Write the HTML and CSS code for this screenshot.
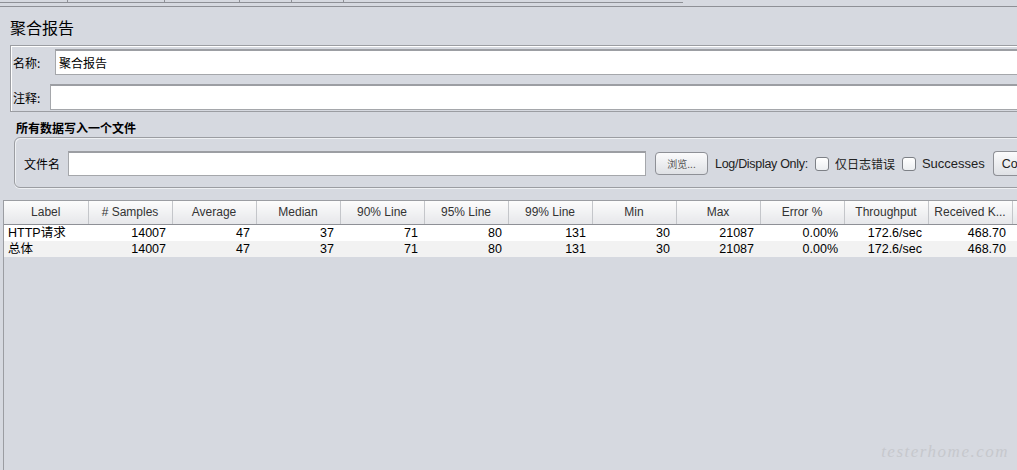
FILE: index.html
```html
<!DOCTYPE html>
<html lang="zh-CN">
<head>
    <meta charset="UTF-8">
    <title>聚合报告</title>
    <link rel="stylesheet" href="styles.css">
</head>
<body>
    <div class="tab-strip">
        <div class="tabs">
            <span class="tick" style="left: 67px"></span>
            <span class="tick" style="left: 164px"></span>
            <span class="tick" style="left: 239px"></span>
            <span class="tick" style="left: 291px"></span>
            <span class="tick" style="left: 343px"></span>
        </div>
    </div>

    <h1 class="title">聚合报告</h1>

    <div class="name-panel">
        <div class="field-row">
            <label class="field-label name-label">名称:</label>
            <input class="text-field" type="text" value="聚合报告">
        </div>
        <div class="field-row">
            <label class="field-label comment-label">注释:</label>
            <input class="text-field" type="text" value="">
        </div>
    </div>

    <div class="section-title">所有数据写入一个文件</div>
    <div class="file-group">
        <span class="file-label">文件名</span>
        <input class="text-field file-input" type="text" value="">
        <button class="btn browse">浏览...</button>
        <span class="opt-label">Log/Display Only:</span>
        <span class="checkbox"></span>
        <span class="opt-text cjk">仅日志错误</span>
        <span class="checkbox"></span>
        <span class="opt-text">Successes</span>
        <button class="btn configure">Co</button>
    </div>

    <div class="table-wrap">
        <table class="stats">
            <thead>
                <tr>
                    <th>Label</th>
                    <th># Samples</th>
                    <th>Average</th>
                    <th>Median</th>
                    <th>90% Line</th>
                    <th>95% Line</th>
                    <th>99% Line</th>
                    <th>Min</th>
                    <th>Max</th>
                    <th>Error %</th>
                    <th>Throughput</th>
                    <th>Received K...</th>
                    <th class="stub"></th>
                </tr>
            </thead>
            <tbody>
                <tr>
                    <td class="lbl">HTTP请求</td>
                    <td>14007</td><td>47</td><td>37</td><td>71</td><td>80</td><td>131</td>
                    <td>30</td><td>21087</td><td>0.00%</td><td>172.6/sec</td><td>468.70</td><td class="stub"></td>
                </tr>
                <tr class="alt">
                    <td class="lbl">总体</td>
                    <td>14007</td><td>47</td><td>37</td><td>71</td><td>80</td><td>131</td>
                    <td>30</td><td>21087</td><td>0.00%</td><td>172.6/sec</td><td>468.70</td><td class="stub"></td>
                </tr>
            </tbody>
        </table>
        <div class="watermark">testerhome.com</div>
    </div>
</body>
</html>
```

FILE: styles.css
```css
* {
    margin: 0;
    padding: 0;
    box-sizing: border-box;
}

html, body {
    height: 100%;
    overflow: hidden;
}

body {
    background: #d6d9e0;
    font-family: 'Liberation Sans', Arial, 'Noto Sans CJK SC', sans-serif;
    font-size: 12px;
    color: #000;
    display: flex;
    flex-direction: column;
}

/* tab strip at the very top */
.tab-strip {
    flex: none;
    height: 7px;
    border-bottom: 1px solid #8e9096;
}

.tabs {
    position: relative;
    width: 683px;
    height: 3px;
    border-bottom: 1px solid #8e9096;
}

.tick {
    position: absolute;
    top: 0;
    width: 1px;
    height: 2px;
    background: #8e9096;
}

.title {
    flex: none;
    font-family: 'Noto Sans CJK SC', sans-serif;
    font-size: 16px;
    font-weight: normal;
    margin: 9px 0 0 10px;
    height: 29px;
    line-height: 22px;
}

/* name / comment */
.name-panel {
    flex: none;
    margin-left: 10px;
    margin-right: -10px;
    border: 1px solid #9b9da2;
    box-shadow: inset 1px 1px 0 #fff;
    padding: 3px 0 1px 1px;
    display: flex;
    flex-direction: column;
    gap: 9px;
}

.field-row {
    display: flex;
    align-items: center;
    height: 26px;
}

.field-label {
    flex: none;
    font-family: 'Noto Sans CJK SC', sans-serif;
    font-size: 12px;
    padding-left: 1px;
}

.name-label {
    width: 43px;
}

.comment-label {
    width: 38px;
}

.text-field {
    flex: 1;
    min-width: 0;
    height: 26px;
    border: 1px solid #a5a7ab;
    border-top: 2px solid #9c9ea3;
    background: #fff;
    font-family: 'Noto Sans CJK SC', sans-serif;
    font-size: 12px;
    padding: 0 3px;
    outline: none;
}

/* write to file */
.section-title {
    flex: none;
    font-family: 'Noto Sans CJK SC', sans-serif;
    font-weight: bold;
    font-size: 12px;
    margin: 6px 0 0 16px;
    height: 19px;
    line-height: 19px;
}

.file-group {
    flex: none;
    margin-left: 14px;
    margin-right: -20px;
    height: 51px;
    border: 1px solid #9b9da2;
    border-radius: 6px;
    box-shadow: inset 1px 1px 0 #eef0f3, 0 1px 0 #eef0f3;
    display: flex;
    align-items: center;
    padding-left: 9px;
    padding-top: 2px;
    overflow: hidden;
}

.file-group > * {
    flex: none;
    white-space: nowrap;
}

.file-label {
    font-family: 'Noto Sans CJK SC', sans-serif;
    width: 44px;
}

.text-field.file-input {
    flex: none;
    width: 578px;
    height: 25px;
}

.btn {
    height: 23px;
    border: 1px solid #8e9096;
    border-radius: 4px;
    background: linear-gradient(#fbfbfc, #dfe1e5);
    font-family: 'Noto Sans CJK SC', sans-serif;
    font-size: 11px;
    color: #333;
}

.browse {
    width: 53px;
    margin-left: 9px;
    font-size: 10px;
    color: #555;
}

.configure {
    width: 24px;
    height: 25px;
    margin-left: 8px;
    border-right: none;
    border-radius: 4px 0 0 4px;
    font-family: 'Liberation Sans', sans-serif;
    font-size: 12.5px;
    text-align: left;
    padding-left: 8px;
    overflow: hidden;
    color: #222;
}

.opt-label {
    margin-left: 7px;
    color: #222;
    font-size: 12.5px;
    letter-spacing: -0.3px;
}

.checkbox {
    width: 14px;
    height: 14px;
    border: 1px solid #7d8086;
    border-radius: 3px;
    background: linear-gradient(#fff, #eceef1);
    margin-left: 7px;
}

.opt-text {
    margin-left: 6px;
    font-family: 'Liberation Sans', 'Noto Sans CJK SC', sans-serif;
    font-size: 13px;
    color: #222;
}

.opt-text.cjk {
    font-family: 'Noto Sans CJK SC', sans-serif;
    font-size: 12px;
}

/* results table */
.table-wrap {
    flex: 1;
    position: relative;
    margin: 12px 0 0 3px;
    border-left: 1px solid #9b9da2;
    border-top: 1px solid #9b9da2;
    overflow: hidden;
}

.stats {
    border-collapse: collapse;
    table-layout: fixed;
    width: 1014px;
}

.stats th {
    width: 84px;
    height: 23px;
    font-weight: normal;
    font-size: 12px;
    color: #333;
    background: linear-gradient(#fcfcfc, #e6e7ea);
    border-right: 1px solid #c4c6ca;
    border-bottom: 1px solid #8e9096;
    text-align: center;
    white-space: nowrap;
    overflow: hidden;
}

.stats th.stub {
    width: 6px;
    border-right: none;
}

.stats td {
    height: 16px;
    font-size: 12.5px;
    line-height: 16px;
    text-align: right;
    padding-right: 6px;
    background: #fff;
    white-space: nowrap;
}

.stats td.stub {
    padding: 0;
}

.stats tr.alt td {
    background: #f2f2f2;
}

.stats td.lbl {
    text-align: left;
    padding-left: 4px;
    font-family: 'Liberation Sans', 'Noto Sans CJK SC', sans-serif;
}

.watermark {
    position: absolute;
    right: 8px;
    bottom: 8px;
    font-family: 'Liberation Serif', serif;
    font-style: italic;
    font-size: 17px;
    letter-spacing: 1.5px;
    color: #c6c8cd;
}
```
